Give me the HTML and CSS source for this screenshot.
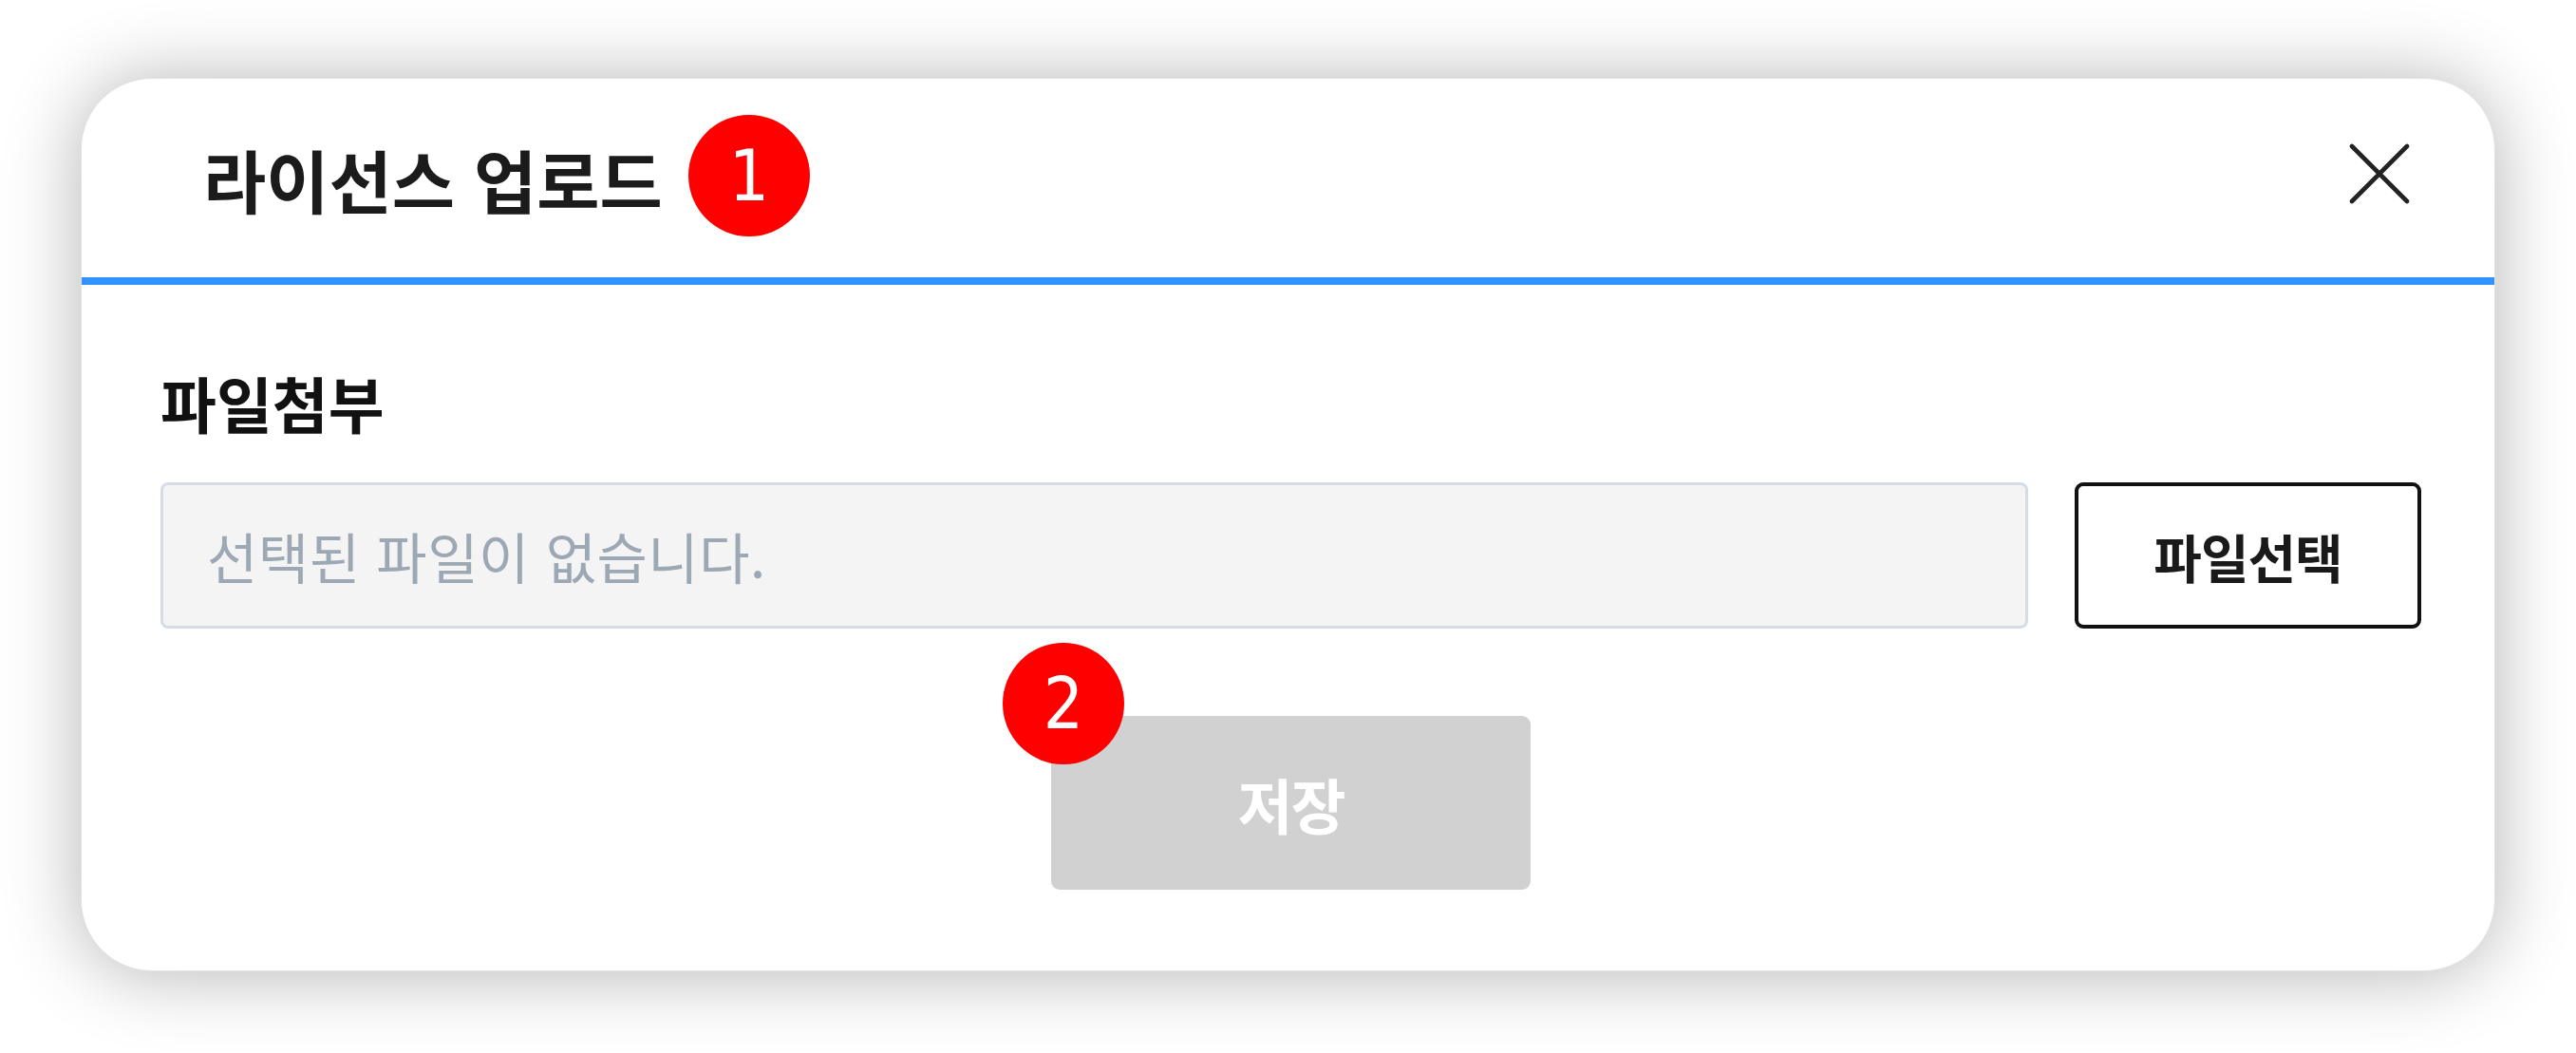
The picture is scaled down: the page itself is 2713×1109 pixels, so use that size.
FILE: index.html
```html
<!DOCTYPE html>
<html lang="ko">
<head>
<meta charset="utf-8">
<title>라이선스 업로드</title>
<link rel="stylesheet" href="styles.css">
</head>
<body>
<div class="modal">
  <div class="modal-header">
    <h1 class="modal-title">라이선스 업로드</h1>
    <span class="badge badge-title">1</span>
    <button class="close-btn" type="button" aria-label="닫기">
      <svg viewBox="0 0 64 64" width="64" height="64"><path d="M3 3 L61 61 M61 3 L3 61" stroke="#222" stroke-width="4.6" stroke-linecap="round" fill="none"/></svg>
    </button>
  </div>
  <div class="modal-body">
    <div class="field-label">파일첨부</div>
    <div class="file-row">
      <div class="file-input">선택된 파일이 없습니다.</div>
      <button class="file-btn" type="button">파일선택</button>
    </div>
    <div class="save-row">
      <button class="save-btn" type="button">저장<span class="badge badge-save">2</span></button>
    </div>
  </div>
</div>
</body>
</html>
```
FILE: styles.css
```css
* { box-sizing: border-box; }
html, body { margin: 0; background: #ffffff; }
body {
  padding: 82px 85px 86px;
  font-family: "Noto Sans CJK KR", "Noto Sans", sans-serif;
}
.modal {
  background: #ffffff;
  border: 1px solid #e2e2e2;
  border-radius: 75px;
  box-shadow: 0 2px 80px rgba(0, 0, 0, 0.3);
}
.modal-header {
  height: 217px;
  display: flex;
  align-items: center;
  padding: 0 89px 0 128px;
  border-bottom: 8px solid #3392fe;
}
.modal-title {
  margin: 0;
  font-size: 72px;
  font-weight: 700;
  line-height: 1;
  letter-spacing: 0;
  color: #1b1b1b;
}
.badge {
  width: 128px;
  height: 128px;
  border-radius: 50%;
  background: #ff0000;
  color: #ffffff;
  display: flex;
  align-items: center;
  justify-content: center;
  font-family: "DejaVu Sans Condensed", "DejaVu Sans", sans-serif;
  font-stretch: condensed;
  font-size: 74px;
  font-weight: 400;
  line-height: 1;
  letter-spacing: 0;
}
.badge-title {
  margin-left: 27px;
  margin-top: -5px;
}
.close-btn {
  margin-left: auto;
  margin-top: -10px;
  padding: 0;
  border: 0;
  background: none;
  width: 64px;
  height: 64px;
  display: block;
}
.close-btn svg { display: block; }
.modal-body {
  padding: 91px 77px 85px 83px;
}
.field-label {
  font-size: 64px;
  font-weight: 700;
  line-height: 64px;
  letter-spacing: 0;
  color: #111111;
}
.file-row {
  display: flex;
  gap: 49px;
  margin-top: 53px;
}
.file-input {
  flex: 1;
  height: 154px;
  background: #f4f4f4;
  border: 3px solid #d5dce5;
  border-radius: 8px;
  padding-left: 46px;
  display: flex;
  align-items: center;
  font-size: 58px;
  letter-spacing: 0.5px;
  color: #9ca8b4;
}
.file-btn {
  width: 365px;
  height: 154px;
  background: #ffffff;
  border: 4px solid #111111;
  border-radius: 9px;
  font-family: inherit;
  font-size: 55px;
  font-weight: 700;
  letter-spacing: -1px;
  color: #1a1a1a;
  padding: 0;
}
.save-row {
  display: flex;
  justify-content: center;
  margin-top: 92px;
}
.save-btn {
  position: relative;
  width: 505px;
  height: 183px;
  background: #d1d1d1;
  border: 0;
  border-radius: 9px;
  font-family: inherit;
  font-size: 63px;
  font-weight: 700;
  letter-spacing: -2px;
  color: #ffffff;
  padding: 0;
}
.badge-save {
  position: absolute;
  left: -51px;
  top: -77px;
}
```
